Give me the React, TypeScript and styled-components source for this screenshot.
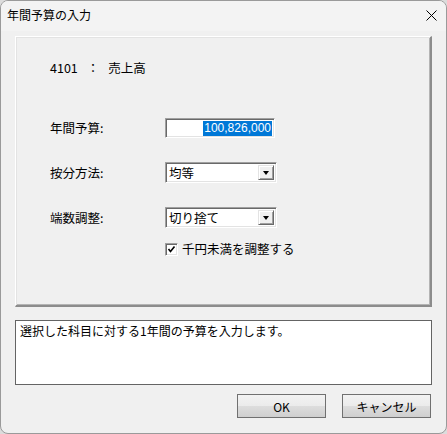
import React from "react";
import styled, { createGlobalStyle } from "styled-components";

const Global = createGlobalStyle`
  html, body { margin: 0; padding: 0; background: #dcdcdc; }
  body { width: 447px; height: 434px; overflow: hidden; }
  * { box-sizing: border-box; }
`;

const FONT = `"Noto Sans CJK JP", "Noto Sans", sans-serif`;

const Window = styled.div`
  width: 447px;
  height: 434px;
  background: #f0f0f0;
  border: 1px solid #9a9a9a;
  border-radius: 8px;
  overflow: hidden;
  display: flex;
  flex-direction: column;
  font-family: ${FONT};
  font-size: 12px;
  color: #000;
`;

const TitleBar = styled.div`
  height: 30px;
  flex: none;
  background: #f3f3f3;
  display: flex;
  align-items: center;
  justify-content: space-between;
  padding: 0 8px 0 6px;
`;

const Title = styled.span`
  font-size: 12px;
  line-height: 14px;
  margin-top: -2px;
`;

const CloseBtn = styled.div`
  width: 14px;
  height: 14px;
  display: flex;
  align-items: center;
  justify-content: center;
  margin-top: -2px;
`;

const Body = styled.div`
  flex: 1;
  display: flex;
  flex-direction: column;
  padding: 5px 14px 0 14px;
`;

const GroupBox = styled.div`
  height: 271px;
  border-top: 1px solid #ffffff;
  border-left: 1px solid #ffffff;
  border-right: 2px solid #8c8c8c;
  border-bottom: 2px solid #8c8c8c;
  box-shadow: inset 1px 1px 0 #e3e3e3, inset -1px -1px 0 #b4b4b4;
  display: flex;
  flex-direction: column;
  padding: 20px 0 0 34px;
`;

const InfoRow = styled.div`
  height: 20px;
  display: flex;
  align-items: center;
  gap: 9px;
  font-size: 12.5px;
`;

const FormRow = styled.div<{ $mt: number }>`
  margin-top: ${(p) => p.$mt}px;
  display: grid;
  grid-template-columns: 115px auto;
  align-items: center;
`;

const Label = styled.span`
  font-size: 12.5px;
  line-height: 16px;
`;

const Sunken = styled.div<{ $w: number; $h: number }>`
  width: ${(p) => p.$w}px;
  height: ${(p) => p.$h}px;
  background: #fff;
  border-top: 1px solid #a0a0a0;
  border-left: 1px solid #a0a0a0;
  border-right: 1px solid #ffffff;
  border-bottom: 1px solid #ffffff;
  box-shadow: inset 1px 1px 0 #696969, inset -1px -1px 0 #e3e3e3;
  display: flex;
  align-items: center;
`;

const NumInput = styled(Sunken)`
  justify-content: flex-end;
  padding-right: 2px;
`;

const Selected = styled.span`
  background: #0078d7;
  color: #fff;
  font-family: "Liberation Sans", sans-serif;
  font-size: 12px;
  line-height: 15px;
  padding: 0 1px;
`;

const SelectBox = styled(Sunken)`
  justify-content: space-between;
  padding: 2px;
`;

const SelectText = styled.span`
  font-size: 12.5px;
  line-height: 16px;
  padding-left: 1px;
`;

const DropBtn = styled.div`
  width: 16px;
  height: 100%;
  background: #f0f0f0;
  border-top: 1px solid #e3e3e3;
  border-left: 1px solid #e3e3e3;
  border-right: 1px solid #696969;
  border-bottom: 1px solid #696969;
  box-shadow: inset 1px 1px 0 #ffffff, inset -1px -1px 0 #a0a0a0;
  display: flex;
  align-items: center;
  justify-content: center;
`;

const Arrow = styled.div`
  width: 0;
  height: 0;
  border-left: 3.5px solid transparent;
  border-right: 3.5px solid transparent;
  border-top: 4px solid #000;
  margin-top: 1px;
`;

const CheckRow = styled.div`
  margin-top: 13px;
  margin-left: 115px;
  display: flex;
  align-items: center;
  gap: 4px;
  height: 16px;
`;

const CheckBox = styled(Sunken)`
  justify-content: center;
`;

const DescBox = styled.div`
  margin-top: 13px;
  height: 65px;
  background: #fff;
  border: 1px solid #646464;
  padding: 2px 4px;
  font-size: 12px;
  line-height: 16px;
`;

const ButtonRow = styled.div`
  margin-top: 9px;
  display: flex;
  justify-content: flex-end;
  gap: 16px;
  padding-right: 1px;
`;

const Button = styled.button`
  width: 89px;
  height: 24px;
  border: 1px solid #707070;
  background: linear-gradient(#f2f2f2 0%, #ebebeb 50%, #dddddd 51%, #cfcfcf 100%);
  font-family: ${FONT};
  font-size: 12px;
  color: #000;
  padding: 0;
  border-radius: 0;
`;

export default function App() {
  return (
    <>
      <Global />
      <Window>
        <TitleBar>
          <Title>年間予算の入力</Title>
          <CloseBtn>
            <svg width="11" height="11" viewBox="0 0 11 11">
              <path d="M0.5 0.5 L10.5 10.5 M10.5 0.5 L0.5 10.5" stroke="#000" strokeWidth="1" fill="none" />
            </svg>
          </CloseBtn>
        </TitleBar>
        <Body>
          <GroupBox>
            <InfoRow>
              <span>4101</span>
              <span>：</span>
              <span>売上高</span>
            </InfoRow>
            <FormRow $mt={41}>
              <Label>年間予算:</Label>
              <NumInput $w={110} $h={20}>
                <Selected>100,826,000</Selected>
              </NumInput>
            </FormRow>
            <FormRow $mt={24}>
              <Label>按分方法:</Label>
              <SelectBox $w={112} $h={21}>
                <SelectText>均等</SelectText>
                <DropBtn>
                  <Arrow />
                </DropBtn>
              </SelectBox>
            </FormRow>
            <FormRow $mt={24}>
              <Label>端数調整:</Label>
              <SelectBox $w={112} $h={21}>
                <SelectText>切り捨て</SelectText>
                <DropBtn>
                  <Arrow />
                </DropBtn>
              </SelectBox>
            </FormRow>
            <CheckRow>
              <CheckBox $w={13} $h={13}>
                <svg width="9" height="9" viewBox="0 0 9 9">
                  <path d="M1.5 4 L3.5 6.5 L7.5 1.5" stroke="#000" strokeWidth="1.6" fill="none" />
                </svg>
              </CheckBox>
              <Label>千円未満を調整する</Label>
            </CheckRow>
          </GroupBox>
          <DescBox>選択した科目に対する1年間の予算を入力します。</DescBox>
          <ButtonRow>
            <Button>OK</Button>
            <Button>キャンセル</Button>
          </ButtonRow>
        </Body>
      </Window>
    </>
  );
}
